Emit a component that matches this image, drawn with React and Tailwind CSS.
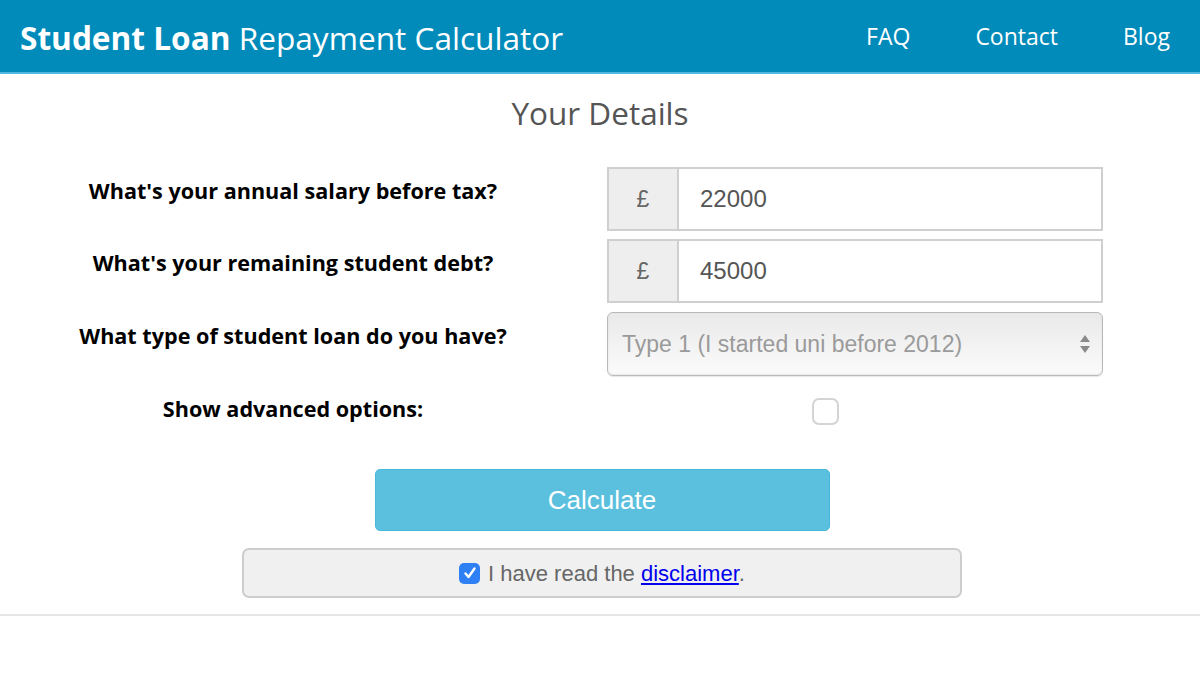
import React from "react";

const openSans = { fontFamily: '"Open Sans", "Noto Sans", sans-serif' };
const helv = { fontFamily: '"Liberation Sans", Arial, sans-serif' };

function Label({ children }) {
  return (
    <div className="w-[586px] shrink-0 pt-[10px] text-center text-[21.6px] font-bold leading-[27px] text-black" style={openSans}>
      {children}
    </div>
  );
}

function MoneyInput({ value }) {
  return (
    <div className="flex h-[64px] w-[496px] border-2 border-[#cfcfcf]">
      <div className="flex w-[70px] items-center justify-center border-r-2 border-[#cfcfcf] bg-[#eeeeee] text-[23px] text-[#666]" style={helv}>
        £
      </div>
      <div className="flex flex-1 items-center bg-white pl-[21px] text-[24px] text-[#555]" style={helv}>
        {value}
      </div>
    </div>
  );
}

export default function App() {
  return (
    <div className="min-h-[675px] w-[1200px] bg-white">
      <header className="flex h-[74px] items-center justify-between border-b-2 border-[#4fb8e0] bg-[#008bba] pl-[20px] pr-[30px] text-white" style={openSans}>
        <div className="pt-[4px] text-[31.6px] leading-none">
          <span className="font-bold">Student Loan</span> Repayment Calculator
        </div>
        <nav className="flex gap-[65px] pl-[2px] text-[23px]">
          <span>FAQ</span>
          <span>Contact</span>
          <span>Blog</span>
        </nav>
      </header>

      <h2 className="mt-[19px] text-center text-[31.5px] leading-[40px] text-[#555]" style={openSans}>
        Your Details
      </h2>

      <div className="mt-[34px]">
        <div className="flex h-[72px]">
          <Label>What's your annual salary before tax?</Label>
          <div className="ml-[21px]">
            <MoneyInput value="22000" />
          </div>
        </div>
        <div className="flex h-[73px]">
          <Label>What's your remaining student debt?</Label>
          <div className="ml-[21px]">
            <MoneyInput value="45000" />
          </div>
        </div>
        <div className="flex h-[73px]">
          <Label>What type of student loan do you have?</Label>
          <div className="ml-[21px]">
            <div className="relative flex h-[64px] w-[496px] items-center rounded-[6px] border border-[#b9b9b9] bg-gradient-to-b from-[#e9e9e9] to-[#fbfbfb] pl-[14px] text-[23px] text-[#9a9a9a] shadow-[inset_0_-1px_2px_rgba(0,0,0,0.08),0_1px_1px_rgba(0,0,0,0.1)]" style={helv}>
              Type 1 (I started uni before 2012)
              <svg className="absolute right-[11px] top-1/2 -translate-y-1/2" width="12" height="22" viewBox="0 0 12 22">
                <path d="M6 2 L11 9 L1 9 Z" fill="#8a8a8a" />
                <path d="M1 13 L11 13 L6 20 Z" fill="#8a8a8a" />
              </svg>
            </div>
          </div>
        </div>
        <div className="flex h-[44px]">
          <Label>Show advanced options:</Label>
          <div className="ml-[226px] pt-[13px]">
            <div className="h-[27px] w-[27px] rounded-[7px] border-2 border-[#d4d4d4] bg-white" />
          </div>
        </div>
      </div>

      <div className="mt-[40px] flex justify-center">
        <button className="ml-[4px] h-[62px] w-[455px] rounded-[5px] border border-[#46b8da] bg-[#5bc0de] text-[26px] text-white" style={helv}>
          Calculate
        </button>
      </div>

      <div className="mt-[17px] flex justify-center">
        <div className="ml-[4px] flex h-[50px] w-[720px] items-center justify-center rounded-[7px] border-2 border-[#cdcdcd] bg-[#f0f0f0] text-[22px] text-[#666]" style={helv}>
          <span className="mr-[8px] flex h-[21px] w-[21px] items-center justify-center rounded-[5px] bg-[#2f80f5]">
            <svg width="14" height="14" viewBox="0 0 14 14">
              <path d="M2.5 7.5 L5.5 11 L11.5 2.5" stroke="white" strokeWidth="2.4" fill="none" strokeLinecap="round" strokeLinejoin="round" />
            </svg>
          </span>
          <span>
            I have read the <a className="text-[#0000ee] underline">disclaimer</a>.
          </span>
        </div>
      </div>

      <div className="mt-[16px] h-[2px] w-full bg-[#e6e6e6]" />
    </div>
  );
}
